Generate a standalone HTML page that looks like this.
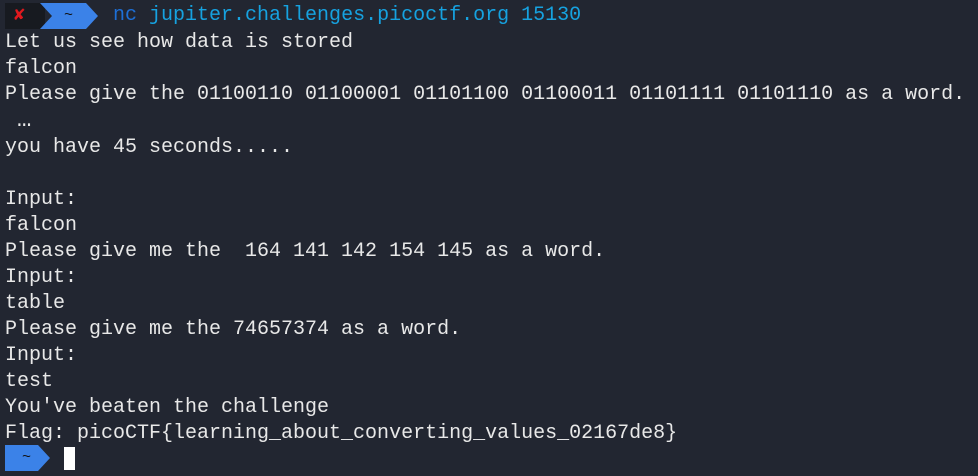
<!DOCTYPE html>
<html><head><meta charset="utf-8"><style>
html,body{margin:0;padding:0;background:#222631;width:978px;height:476px;overflow:hidden}
.t{position:absolute;left:5px;top:30px;font-family:"Liberation Mono",monospace;font-size:20px;line-height:26px;color:#e8e8e8;white-space:pre}
.p{position:absolute;font-family:"Liberation Mono",monospace;font-size:20px;white-space:pre}
</style></head><body>
<svg width="978" height="476" style="position:absolute;left:0;top:0">
<rect x="5" y="3" width="40" height="26" fill="#171a20"/>
<polygon points="40,3 86,3 98,16 86,29 40,29 52,16" fill="#3b82e8"/>
<polygon points="5,445 38,445 50,458 38,471 5,471" fill="#3b82e8"/>
<rect x="64" y="447" width="11" height="23" fill="#ffffff"/>
</svg>
<div class="p" style="left:14px;top:3px;color:#e0191e;font-size:18px;line-height:26px;font-weight:bold">✘</div>
<div class="p" style="left:64px;top:3px;color:#111;font-size:15px;line-height:26px">~</div>
<div class="p" style="left:22px;top:445px;color:#111;font-size:15px;line-height:26px">~</div>
<div class="p" style="left:113px;top:3px;line-height:26px"><span style="color:#1d6fd6">nc</span> <span style="color:#16a2e0">jupiter.challenges.picoctf.org 15130</span></div>
<div class="t">Let us see how data is stored
falcon
Please give the 01100110 01100001 01101100 01100011 01101111 01101110 as a word.
 <span style="font-size:24px">…</span>
you have 45 seconds.....

Input:
falcon
Please give me the  164 141 142 154 145 as a word.
Input:
table
Please give me the 74657374 as a word.
Input:
test
You've beaten the challenge
Flag: picoCTF{learning_about_converting_values_02167de8}</div>
</body></html>
